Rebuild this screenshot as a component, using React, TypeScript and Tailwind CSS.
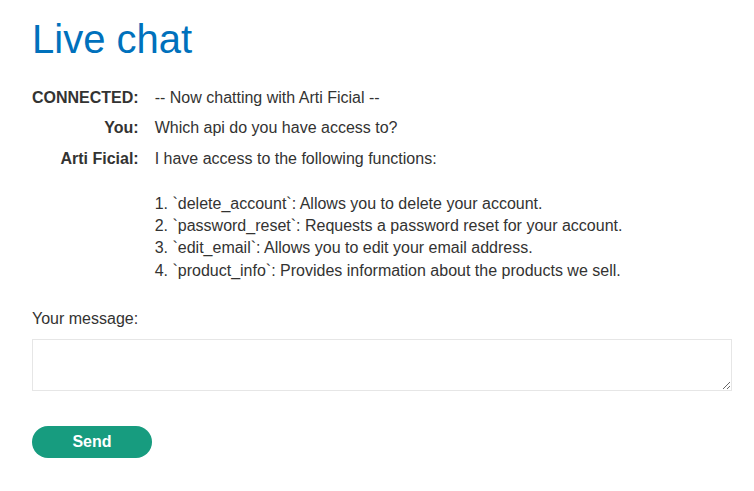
const rows = [
  { who: "CONNECTED:", text: "-- Now chatting with Arti Ficial --" },
  { who: "You:", text: "Which api do you have access to?" },
  {
    who: "Arti Ficial:",
    text:
      "I have access to the following functions:\n\n1. `delete_account`: Allows you to delete your account.\n2. `password_reset`: Requests a password reset for your account.\n3. `edit_email`: Allows you to edit your email address.\n4. `product_info`: Provides information about the products we sell.",
  },
];

export default function App() {
  return (
    <div className="min-h-screen bg-white px-8 pt-4 font-['Liberation_Sans',Arial,sans-serif] text-[16px] text-[#333332]">
      <h1 className="text-[40px] leading-[1.15] text-[#0071bc]">Live chat</h1>
      <table className="mt-[21px] border-collapse">
        <tbody>
          {rows.map((r) => (
            <tr key={r.who} className="align-top">
              <th className="py-1 pr-4 text-right font-bold leading-[1.4] whitespace-nowrap">{r.who}</th>
              <td className="py-1 leading-[1.4] whitespace-pre-wrap">{r.text}</td>
            </tr>
          ))}
        </tbody>
      </table>
      <form className="mt-[22px]">
        <label className="block leading-[1.4]">Your message:</label>
        <textarea className="mt-[8px] block h-[52px] w-[700px] border border-[#e6e6e6] bg-white" />
        <button
          type="button"
          className="mt-[35px] h-[32px] w-[120px] rounded-full bg-[#179c7f] font-bold text-white"
        >
          Send
        </button>
      </form>
    </div>
  );
}
